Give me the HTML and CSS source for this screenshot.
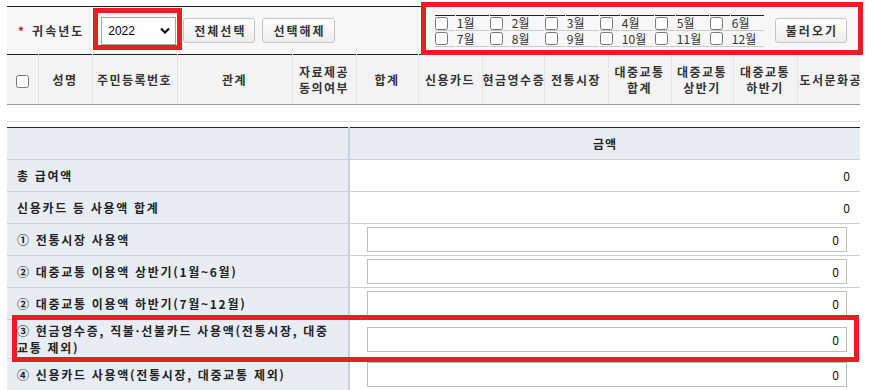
FILE: index.html
```html
<!DOCTYPE html>
<html lang="ko">
<head>
    <meta charset="UTF-8">
    <meta name="viewport" content="width=device-width, initial-scale=1.0">
    <title>신용카드 등 사용액</title>
    <link rel="stylesheet" href="styles.css">
</head>
<body>
<div class="page">
    <div class="toolbar">
        <div class="year-area">
            <span class="req">*</span>
            <span class="year-label">귀속년도</span>
            <div class="select-box">
                <span>2022</span>
                <svg width="10" height="7" viewBox="0 0 10 7"><polyline points="1,1.5 5,5.5 9,1.5" fill="none" stroke="#111" stroke-width="2.2"/></svg>
            </div>
            <button class="btn">전체선택</button>
            <button class="btn">선택해제</button>
        </div>
        <div class="month-area">
            <table class="months">
                <tr>
                    <td class="chk"><input type="checkbox"></td><td class="lbl">1월</td>
                    <td class="chk"><input type="checkbox"></td><td class="lbl">2월</td>
                    <td class="chk"><input type="checkbox"></td><td class="lbl">3월</td>
                    <td class="chk"><input type="checkbox"></td><td class="lbl">4월</td>
                    <td class="chk"><input type="checkbox"></td><td class="lbl">5월</td>
                    <td class="chk"><input type="checkbox"></td><td class="lbl">6월</td>
                </tr>
                <tr>
                    <td class="chk"><input type="checkbox"></td><td class="lbl">7월</td>
                    <td class="chk"><input type="checkbox"></td><td class="lbl">8월</td>
                    <td class="chk"><input type="checkbox"></td><td class="lbl">9월</td>
                    <td class="chk"><input type="checkbox"></td><td class="lbl">10월</td>
                    <td class="chk"><input type="checkbox"></td><td class="lbl">11월</td>
                    <td class="chk"><input type="checkbox"></td><td class="lbl">12월</td>
                </tr>
            </table>
            <button class="btn">불러오기</button>
        </div>
    </div>

    <div class="grid-wrap">
        <table class="grid">
            <tr>
                <th class="c-chk"><input type="checkbox"></th>
                <th class="c-name">성명</th>
                <th class="c-rrn">주민등록번호</th>
                <th class="c-rel">관계</th>
                <th class="c-64">자료제공<br>동의여부</th>
                <th class="c-62">합계</th>
                <th class="c-64">신용카드</th>
                <th class="c-62">현금영수증</th>
                <th class="c-64">전통시장</th>
                <th class="c-63">대중교통<br>합계</th>
                <th class="c-62">대중교통<br>상반기</th>
                <th class="c-64">대중교통<br>하반기</th>
                <th class="c-80">도서문화공연</th>
            </tr>
        </table>
        <div class="grid-body"></div>
    </div>

    <table class="amount">
        <tr>
            <th class="item"></th>
            <th class="head">금액</th>
        </tr>
        <tr>
            <td class="item">총 급여액</td>
            <td class="val plain">0</td>
        </tr>
        <tr>
            <td class="item">신용카드 등 사용액 합계</td>
            <td class="val plain">0</td>
        </tr>
        <tr>
            <td class="item">① 전통시장 사용액</td>
            <td class="val"><input type="text" value="0"></td>
        </tr>
        <tr>
            <td class="item">② 대중교통 이용액 상반기(1월~6월)</td>
            <td class="val"><input type="text" value="0"></td>
        </tr>
        <tr>
            <td class="item">② 대중교통 이용액 하반기(7월~12월)</td>
            <td class="val"><input type="text" value="0"></td>
        </tr>
        <tr class="tall">
            <td class="item">③ 현금영수증, 직불·선불카드 사용액(전통시장, 대중<br>교통 제외)</td>
            <td class="val"><input type="text" value="0"></td>
        </tr>
        <tr>
            <td class="item">④ 신용카드 사용액(전통시장, 대중교통 제외)</td>
            <td class="val"><input type="text" value="0"></td>
        </tr>
    </table>

    <!-- highlight boxes -->
    <div class="mark mark-year"></div>
    <div class="mark mark-month"></div>
    <div class="mark mark-row"></div>
</div>
</body>
</html>
```

FILE: styles.css
```css
* {
    box-sizing: border-box;
}
body {
    margin: 0;
    font-family: "Noto Sans CJK KR", "Noto Sans", sans-serif;
    font-size: 12px;
    color: #333;
    background: #fff;
    overflow: hidden;
}
.page {
    position: relative;
    width: 860px;
    padding: 6px 0 0 7px;
}

/* toolbar */
.toolbar {
    display: flex;
    align-items: center;
    justify-content: space-between;
    height: 48px;
    border-top: 1px solid #222;
    background: #f7f7f7;
    padding: 0 13px 0 11px;
}
.year-area {
    display: flex;
    align-items: center;
}
.req {
    color: #c8102e;
    font-weight: bold;
    font-size: 12px;
    margin-right: 8px;
    line-height: 12px;
}
.year-label {
    font-weight: bold;
    letter-spacing: 2px;
    color: #333;
    margin-right: 17px;
}
.select-box {
    display: flex;
    align-items: center;
    justify-content: space-between;
    width: 75px;
    height: 28px;
    padding: 0 5px 0 6px;
    border: 1px solid #a5a5a5;
    background: #fff;
    font-family: "Liberation Sans", Arial, sans-serif;
    font-size: 12px;
    color: #000;
}
.btn {
    height: 25px;
    margin-left: 7px;
    padding: 0 8px 0 10px;
    border: 1px solid #c5c5c5;
    border-radius: 3px;
    background: linear-gradient(#fff, #ededed);
    font-family: "Noto Sans CJK KR", sans-serif;
    font-size: 12px;
    font-weight: bold;
    letter-spacing: 2px;
    color: #333;
    line-height: 23px;
}
.month-area {
    display: flex;
    align-items: center;
}
.month-area .btn {
    margin-left: 10px;
}
.months {
    border-collapse: separate;
    border-spacing: 1px 0;
    margin-top: 1px;
}
.months td {
    height: 16px;
    padding: 0;
    border-bottom: 1px solid #c8c8c8;
    line-height: 14px;
    font-size: 12px;
    color: #333;
}
.months tr:first-child td {
    border-top: 1px solid #222;
}
.months .chk {
    width: 20px;
}
.months .lbl {
    width: 33px;
    padding-left: 1px;
}
.months input {
    display: block;
    width: 13px;
    height: 13px;
    margin: 0;
}

/* list header */
.grid-wrap {
    width: 853px;
    overflow: hidden;
}
.grid {
    border-collapse: collapse;
    table-layout: fixed;
    width: 870px;
    border-top: 1px solid #222;
}
.grid th {
    height: 50px;
    padding: 0;
    background: #f3f3f3;
    border-bottom: 1px solid #9c9c9c;
    border-right: 1px solid #e3e3e3;
    font-weight: bold;
    letter-spacing: 1.5px;
    line-height: 16px;
    color: #333;
    text-align: center;
    white-space: nowrap;
}
.grid input {
    width: 13px;
    height: 13px;
    margin: 0;
    vertical-align: middle;
}
.c-chk { width: 31px; }
.c-name { width: 54px; }
.c-rrn { width: 85px; }
.c-rel { width: 115px; }
.c-62 { width: 62px; }
.c-63 { width: 63px; }
.c-64 { width: 64px; }
.c-80 { width: 80px; }
.grid-body {
    height: 17px;
    border-bottom: 1px solid #dcdcdc;
}

/* amount table */
.amount {
    width: 853px;
    margin-top: 5px;
    border-collapse: collapse;
    table-layout: fixed;
    border-top: 1px solid #222;
}
.amount th,
.amount td {
    height: 32px;
    padding: 0;
    border-bottom: 1px solid #c9d0da;
    font-size: 12px;
}
.amount .item {
    width: 342px;
    padding: 0 4px 0 10px;
    background: #e8edf5;
    border-right: 2px solid #c9d0da;
    text-align: left;
    font-weight: bold;
    letter-spacing: 1.7px;
    line-height: 17px;
    color: #222;
    white-space: nowrap;
}
.amount .head {
    background: #e8edf5;
    font-weight: bold;
    letter-spacing: 1px;
    color: #222;
    text-align: center;
}
.amount .val {
    padding: 0 14px 0 17px;
    background: #fff;
}
.amount .plain {
    text-align: right;
    padding-right: 10px;
    color: #111;
}
.amount .tall td {
    height: 39px;
    padding-top: 2px;
    padding-bottom: 2px;
}
.amount input {
    display: block;
    width: 480px;
    height: 25px;
    padding: 0 7px;
    border: 1px solid #bdbdbd;
    text-align: right;
    font-family: "Noto Sans CJK KR", sans-serif;
    font-size: 12px;
    color: #111;
}

/* red annotation boxes */
.mark {
    position: absolute;
    border: 5px solid #ec1c24;
}
.mark-year {
    left: 93px;
    top: 8px;
    width: 89px;
    height: 42px;
}
.mark-month {
    left: 421px;
    top: 2px;
    width: 442px;
    height: 53px;
}
.mark-row {
    left: 12px;
    top: 315px;
    width: 847px;
    height: 47px;
}
```
